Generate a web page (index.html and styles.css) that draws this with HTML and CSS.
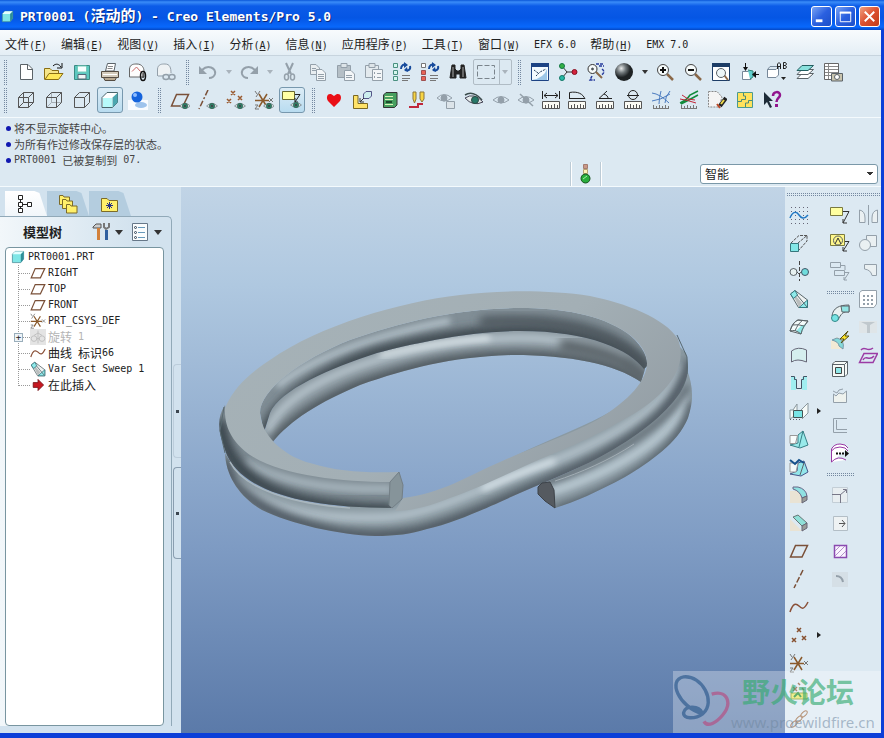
FILE: index.html
```html
<!DOCTYPE html>
<html lang="zh-CN">
<head>
<meta charset="utf-8">
<title>PRT0001 (活动的) - Creo Elements/Pro 5.0</title>
<link rel="stylesheet" href="styles.css">
</head>
<body>
<svg class="sprite" aria-hidden="true">
  <symbol id="plane" viewBox="0 0 20 20"><path d="M6.500 4.500H18.500L13 16H1.500Z" stroke="#7a5038" stroke-width="1.500"/></symbol>
  <symbol id="csys" viewBox="0 0 20 20"><path d="M1 10.500H15M5 4L13 17M13 4L5 17" stroke="#8a5a2c" stroke-width="1.500"/><path d="M1 1L3 4M6 1L2 7M15 8L19 12M19 8L15 12M1 15H4L1 19H5" stroke="#777"/></symbol>
  <symbol id="curve" viewBox="0 0 20 20"><path d="M1 15C4 6 7 6 10 9S15 13 19 5" stroke="#8a5038" stroke-width="1.500"/></symbol>
  <symbol id="cube" viewBox="0 0 20 20"><path d="M2 6L6 2H18V13L14 18H2Z" fill="#7fe6e6" stroke="#3c8490"/><path d="M2 6L6 2H18L14 6Z" fill="#e2ffff" stroke="none"/><path d="M14 6L18 2V13L14 18Z" fill="#2e8e98" stroke="none"/></symbol>
  <symbol id="sweep" viewBox="0 0 20 20"><path d="M1.500 5L6 1.500L18.500 11V18.500H9.500Z" fill="#eef2f2" stroke="#5a686c"/><path d="M5 8L10 18L13 14L6 6Z" fill="#b9bdbd" stroke="none"/><path d="M1.500 5L6 1.500L8.500 6L4.500 9.500Z" fill="#8eeaea" stroke="#367880"/><path d="M18.500 11V18.500H10Z" fill="#8eeaea" stroke="#367880"/><path d="M8 6L18 18" stroke="#5a686c"/></symbol>
  <symbol id="eye" viewBox="0 0 20 20"><path d="M1 10Q10 1 19 10Q10 18 1 10Z" fill="#dfe7e7"/><circle cx="10" cy="10" r="4.500" fill="#2e8068" stroke="#2c5c4c"/><circle cx="10" cy="10" r="1.500" fill="#111"/></symbol>
  <symbol id="ruler" viewBox="0 0 20 20"><path d="M1.500 11.500H18.500V18.500H1.500Z" fill="#fbfbf4" stroke="#555"/><path d="M4.500 18V15M7.500 18V14M10.500 18V15M13.500 18V14M16.500 18V15" stroke="#555"/></symbol>
  <symbol id="lens" viewBox="0 0 20 20"><path d="M12 12L18 18" stroke="#8a6848" stroke-width="2.500"/><circle cx="8" cy="8" r="5.500" fill="#f5fafa" stroke="#444"/></symbol>
  <symbol id="sheets" viewBox="0 0 20 20"><path d="M2.500 2.500H8L11.500 6V12.500H2.500Z" fill="#e9eef1"/><path d="M8.500 7.500H14L17.500 11V18.500H8.500Z" fill="#f3f6f8"/><path d="M10 12.500H16M10 14.500H16M10 16.500H16M4 6.500H8M4 8.500H8"/></symbol>
  <symbol id="regen" viewBox="0 0 20 20"><path d="M10 16.500H18M10 13.500H18M10 18.500H16" stroke="#777"/><path d="M9 7C9 3 12 2 14 3M18 4C19 8 16 9 13 8" stroke="#164a9c" stroke-width="2"/><path d="M12 0L16 3L12 6ZM15 5L12 8L16 10Z" fill="#164a9c" stroke="none"/></symbol>
</svg>

<div class="window">
  <header class="titlebar">
    <svg class="app-icon" viewBox="0 0 20 20"><use href="#cube"/></svg>
    <h1>PRT0001 (<span class="zh">活动的</span>) - Creo Elements/Pro 5.0</h1>
    <div class="caption-buttons">
      <button class="caption" aria-label="最小化"><svg viewBox="0 0 20 20"><path d="M4 14.500H11" stroke="#fff" stroke-width="3"/></svg></button>
      <button class="caption" aria-label="最大化"><svg viewBox="0 0 20 20"><path d="M5 5.500H15.500V15.500H4.500V5" stroke="#fff"/><path d="M4 6H16" stroke="#fff" stroke-width="2"/></svg></button>
      <button class="caption close" aria-label="关闭"><svg viewBox="0 0 20 20"><path d="M5 5L15 15M15 5L5 15" stroke="#fff" stroke-width="2"/></svg></button>
    </div>
  </header>

  <nav class="menubar">
    <a href="#"><span class="zh">文件</span>(<u>F</u>)</a>
    <a href="#"><span class="zh">编辑</span>(<u>E</u>)</a>
    <a href="#"><span class="zh">视图</span>(<u>V</u>)</a>
    <a href="#"><span class="zh">插入</span>(<u>I</u>)</a>
    <a href="#"><span class="zh">分析</span>(<u>A</u>)</a>
    <a href="#"><span class="zh">信息</span>(<u>N</u>)</a>
    <a href="#"><span class="zh">应用程序</span>(<u>P</u>)</a>
    <a href="#"><span class="zh">工具</span>(<u>T</u>)</a>
    <a href="#"><span class="zh">窗口</span>(<u>W</u>)</a>
    <a href="#">EFX 6.0</a>
    <a href="#"><span class="zh">帮助</span>(<u>H</u>)</a>
    <a href="#">EMX 7.0</a>
  </nav>

  <div class="toolbars">
    <div class="toolrow">
      <i class="grip"></i>
      <button class="tool" aria-label="新建"><svg viewBox="0 0 20 20"><path d="M4.500 2.500H12L16.500 7V17.500H4.500Z" fill="#fff"/><path d="M11.500 2.500V7.500H16.500"/></svg></button>
      <button class="tool" aria-label="打开"><svg viewBox="0 0 20 20"><path d="M.500 17.500V6.500H6L8 8.500H14.500V11" fill="#f6e68a" stroke="#8a6e14"/><path d="M1 17.500L5 11.500H19L14.500 17.500Z" fill="#ffe95a" stroke="#8a6e14"/><path d="M9 4C12 1 15 2 17 5M18 1V6H13" stroke="#111"/></svg></button>
      <button class="tool" aria-label="保存"><svg viewBox="0 0 20 20"><path d="M2.500 3.500H17.500V17.500H2.500Z" fill="#5cc8c0" stroke="#3c8a84"/><path d="M5.500 4H14.500V10H5.500Z" fill="#f7ffff" stroke="#7cb"/><path d="M6 12.500H14V17H6Z" fill="#f0f6f6" stroke="#567"/></svg></button>
      <button class="tool" aria-label="打印"><svg viewBox="0 0 20 20"><path d="M5.500 9L7.500 1.500H15.500L14 9Z" fill="#fff"/><path d="M8 4.500H13M7.500 6.500H12.500" stroke="#888"/><path d="M1.500 9.500H18.500V15.500H1.500Z" fill="#d4cbbb" stroke="#554c42"/><path d="M3.500 15.500H16.500L15 18.500H5Z" fill="#b8a890" stroke="#554c42"/><path d="M3 12.500H17" stroke="#fff"/></svg></button>
      <button class="tool" aria-label="邮寄"><svg viewBox="0 0 20 20"><path d="M1.500 15V7C2 2 6 2 9 2C14 2 16 6 16 9V15Z" fill="#fdfdfd" stroke="#666"/><path d="M4 9.500L8.500 5L12.500 9.500" stroke="#c86868"/><ellipse cx="15" cy="14" rx="2.500" ry="4.500" stroke="#111" stroke-width="1.500"/><path d="M15 11V16" stroke="#111"/></svg></button>
      <button class="tool off" aria-label="链接"><svg viewBox="0 0 20 20"><path d="M1.500 14V7C2 2 6 2 9 2C14 2 15 6 15 11" fill="#eef2f4"/><path d="M2 14H7"/><ellipse cx="10" cy="15" rx="3" ry="2.500" stroke-width="1.500"/><ellipse cx="16" cy="15" rx="3" ry="2.500" stroke-width="1.500"/></svg></button>
      <i class="grip"></i>
      <button class="tool off" aria-label="撤消"><svg viewBox="0 0 20 20"><path d="M4 8C10 2 18 6 17 12C16 15 13 16 11 16" stroke-width="2"/><path d="M1 4V12H9Z" fill="#94a0aa" stroke="none"/></svg></button>
      <button class="drop off" aria-label="撤消列表"></button>
      <button class="tool off" aria-label="重做"><svg viewBox="0 0 20 20"><path d="M16 8C10 2 2 6 3 12C4 15 7 16 9 16" stroke-width="2"/><path d="M19 4V12H11Z" fill="#94a0aa" stroke="none"/></svg></button>
      <button class="drop off" aria-label="重做列表"></button>
      <button class="tool off" aria-label="剪切"><svg viewBox="0 0 20 20"><path d="M6 1L11 12M13 1L8 12" stroke-width="2"/><ellipse cx="6.500" cy="15" rx="2" ry="3" stroke-width="1.500"/><ellipse cx="12.500" cy="15" rx="2" ry="3" stroke-width="1.500"/></svg></button>
      <button class="tool off" aria-label="复制"><svg viewBox="0 0 20 20"><use href="#sheets"/></svg></button>
      <button class="tool off" aria-label="粘贴"><svg viewBox="0 0 20 20"><path d="M1.500 3.500H14.500V15.500H1.500Z" fill="#b5bfc6"/><path d="M5 3.500V1.500H11V5.500H5Z" fill="#dde4e8"/><path d="M8.500 8.500H15L18.500 12V18.500H8.500Z" fill="#f3f6f8"/><path d="M10 13.500H16M10 15.500H16"/></svg></button>
      <button class="tool off" aria-label="选择性粘贴"><svg viewBox="0 0 20 20"><path d="M1.500 3.500H14.500V15.500H1.500Z" fill="#e3eaee"/><path d="M5 3.500V1.500H11V5.500H5Z" fill="#dde4e8"/><path d="M8.500 7.500H18.500V18.500H8.500Z" fill="#f3f6f8"/><path d="M10.500 10V12M10.500 14V16M13 11.500H17M13 15.500H17"/></svg></button>
      <button class="tool" aria-label="再生"><svg viewBox="0 0 20 20"><use href="#regen"/><path d="M1.500 1.500H5.500V5.500H1.500ZM1.500 8.500H5.500V12.500H1.500ZM1.500 14.500H5.500V18.500H1.500Z" fill="#d6f6ee" stroke="#4a9080"/></svg></button>
      <button class="tool" aria-label="再生管理器"><svg viewBox="0 0 20 20"><use href="#regen"/><path d="M1.500 1.500H5.500V5.500H1.500Z" fill="#fff" stroke="#777"/><path d="M1.500 8.500H5.500V12.500H1.500ZM1.500 14.500H5.500V18.500H1.500Z" fill="#e86458" stroke="#a05050"/></svg></button>
      <button class="tool" aria-label="查找"><svg viewBox="0 0 20 20"><path d="M4 3H7V7L9 9H11L13 7V3H16L18 16H12V12H8V16H2Z" fill="#222" stroke="#222"/><path d="M5 5V15M15 5V15" stroke="#aaa"/></svg></button>
      <button class="selectbox" aria-label="选取框"><svg viewBox="0 0 20 20"><path d="M1.500 3.500H18.500V16.500H1.500Z" stroke="#7a848c" stroke-dasharray="5 2"/></svg><b></b></button>
      <i class="grip"></i>
      <button class="tool" aria-label="重画"><svg viewBox="0 0 20 20"><path d="M1.500 1.500H18.500V18.500H1.500Z" fill="#f4fbff" stroke="#1d4384"/><path d="M1 3H19" stroke="#1d4384" stroke-width="4"/><path d="M2 18Q14 16 17 7V18Z" fill="#9cc7e8" stroke="none"/><path d="M4 8L8 11M6 14L10 10L16 7" stroke="#28415f" stroke-dasharray="2 1"/></svg></button>
      <button class="tool" aria-label="旋转中心"><svg viewBox="0 0 20 20"><path d="M4 4L9 10L4 16M9 10H16" stroke="#333"/><circle cx="4" cy="4" r="2.500" fill="#35b045" stroke="#174"/><circle cx="4" cy="16" r="2.500" fill="#27b9a6" stroke="#176"/><circle cx="16.500" cy="10" r="2.500" fill="#d4233c" stroke="#812"/></svg></button>
      <button class="tool" aria-label="定向模式"><svg viewBox="0 0 20 20"><path d="M10 10L16 16" stroke="#8a6848" stroke-width="2"/><circle cx="6.500" cy="7" r="4.500" fill="#f6fafa" stroke="#333"/><circle cx="6.500" cy="7" r="1" fill="#333"/><path d="M10 2H17M13 4H18M6 14L4 18H9M16 7C19 9 18 12 15 13" stroke="#253a9c" stroke-width="1.500" stroke-dasharray="3 1"/></svg></button>
      <button class="tool" aria-label="外观库"><svg viewBox="0 0 20 20"><defs><radialGradient id="ball" cx=".35" cy=".3"><stop offset="0" stop-color="#e8eaea"/><stop offset=".5" stop-color="#70777a"/><stop offset="1" stop-color="#1e2224"/></radialGradient></defs><circle cx="10" cy="10" r="9" fill="url(#ball)" stroke="none"/></svg></button>
      <button class="drop" aria-label="外观列表"></button>
      <button class="tool" aria-label="放大"><svg viewBox="0 0 20 20"><use href="#lens"/><path d="M5 8H11M8 5V11" stroke="#111" stroke-width="2"/></svg></button>
      <button class="tool" aria-label="缩小"><svg viewBox="0 0 20 20"><use href="#lens"/><path d="M5 8H11" stroke="#111" stroke-width="2"/></svg></button>
      <button class="tool" aria-label="重新调整"><svg viewBox="0 0 20 20"><path d="M1.500 1.500H18.500V18.500H1.500Z" fill="#fff" stroke="#1d3d66"/><path d="M1 3H19" stroke="#1d3d66" stroke-width="4"/><path d="M13 13L17 18" stroke="#8a6848" stroke-width="2"/><circle cx="10" cy="11" r="4.500" fill="#edf6f8"/></svg></button>
      <button class="tool" aria-label="重定向"><svg viewBox="0 0 20 20"><path d="M3.500 9.500H12V17.500H3.500Z" fill="#fff" stroke="#789"/><path d="M9 8L14 9V15L11 17" fill="#62cfcf" stroke="#387"/><path d="M6.500 1V7M20 12.500H15" stroke="#111"/><path d="M4 5H9L6.500 9ZM17 9V16L13 12.500Z" fill="#111" stroke="none"/></svg></button>
      <button class="tool" aria-label="已命名视图"><svg viewBox="0 0 20 20"><path d="M.500 7.500H9L11.500 5V13L9 15.500H.500Z" fill="#fff" stroke="#789"/><path d="M.500 7.500L3 4.500H11" stroke="#789"/><path d="M10.500 7V2L12 .500L13.500 2V7M10.500 4.500H13.500M16.500 .500V7M16.500 .500H18.500L19.500 2L18.500 3.500L19.500 5L18.500 6.500H16.500M16.500 3.500H18.500" stroke="#222"/><path d="M14 15H19L16.500 18Z" fill="#222" stroke="none"/></svg></button>
      <button class="tool" aria-label="层"><svg viewBox="0 0 20 20"><path d="M2 16.500L7 11.500H18.500L13 16.500Z" fill="#fff"/><path d="M2 12.500L7 7.500H18.500L13 12.500Z" fill="#fff"/><path d="M2 8.500L7 3.500H18.500L13 8.500Z" fill="#89e0dc" stroke="#245e60"/></svg></button>
      <button class="tool" aria-label="视图管理器"><svg viewBox="0 0 20 20"><path d="M1.500 1.500H15.500V17.500H1.500Z" fill="#fff" stroke="#666"/><path d="M5.500 2V17M2 4.500H15M2 7.500H15M2 10.500H15M2 13.500H10" stroke="#888"/><path d="M8.500 11.500H19.500V19H8.500Z" fill="#c9c4ae"/><circle cx="14" cy="15" r="2.500" fill="#fff"/></svg></button>
    </div>

    <div class="toolrow">
      <i class="grip"></i>
      <button class="tool" aria-label="线框"><svg viewBox="0 0 20 20"><path d="M2.500 7.500H12.500V17.500H2.500ZM7.500 2.500H17.500V12.500H7.500ZM2.500 7.500L7.500 2.500M12.500 7.500L17.500 2.500M12.500 17.500L17.500 12.500M2.500 17.500L7.500 12.500" stroke="#555"/></svg></button>
      <button class="tool" aria-label="隐藏线"><svg viewBox="0 0 20 20"><path d="M7.500 2.500V12.500H17.500M2.500 17.500L7.500 12.500" stroke="#a5adb3"/><path d="M2.500 7.500H12.500V17.500H2.500ZM2.500 7.500L7.500 2.500H17.500V12.500L12.500 17.500M12.500 7.500L17.500 2.500" stroke="#555"/></svg></button>
      <button class="tool" aria-label="消隐"><svg viewBox="0 0 20 20"><path d="M2.500 7.500H12.500V17.500H2.500ZM2.500 7.500L7.500 2.500H17.500V12.500L12.500 17.500M12.500 7.500L17.500 2.500" stroke="#555"/></svg></button>
      <button class="tool on" aria-label="着色"><svg viewBox="0 0 20 20"><path d="M2 7.500L7 2.500H17.500V12.500L12.500 17.500H2Z" fill="#fff" stroke="#49666c"/><path d="M12.500 7.500L17.500 3V12.500L12.500 17.500Z" fill="#4aa6b0" stroke="none"/><path d="M3 8H12V17H3Z" fill="#b7fafa" stroke="none"/></svg></button>
      <button class="tool" aria-label="增强的真实感"><svg viewBox="0 0 20 20"><path d="M0 10H20V20H0Z" fill="#f8fbff" stroke="none"/><ellipse cx="13" cy="15" rx="6" ry="3" fill="#9ec3ec" stroke="none"/><circle cx="9" cy="7" r="5.500" fill="#1463dc" stroke="none"/><circle cx="7" cy="5" r="2" fill="#8dbcff" stroke="none"/></svg></button>
      <i class="grip"></i>
      <button class="tool" aria-label="基准平面显示"><svg viewBox="0 0 20 20"><use href="#plane"/><use href="#eye" x="9" y="10" width="12" height="12"/></svg></button>
      <button class="tool" aria-label="基准轴显示"><svg viewBox="0 0 20 20"><path d="M10 0L1 19" stroke="#7a5038" stroke-width="1.500" stroke-dasharray="6 2 2 2"/><use href="#eye" x="8" y="10" width="12" height="12"/></svg></button>
      <button class="tool" aria-label="基准点显示"><svg viewBox="0 0 20 20"><path d="M5 1L9 5M9 1L5 5M1 9L5 13M5 9L1 13M12 6L16 10M16 6L12 10" stroke="#9a5a30" stroke-width="1.500"/><use href="#eye" x="8" y="10" width="12" height="12"/></svg></button>
      <button class="tool" aria-label="坐标系显示"><svg viewBox="0 0 20 20"><use href="#csys"/><use href="#eye" x="9" y="10" width="12" height="12"/></svg></button>
      <button class="tool on" aria-label="注释显示"><svg viewBox="0 0 20 20"><path d="M.500 1.500H12.500V9.500H.500Z" fill="#ffffa4" stroke="#6a6a30"/><path d="M13 4.500H18L13 12M13 8V12H16" stroke="#222"/><use href="#eye" x="8" y="9" width="12" height="12"/></svg></button>
      <i class="grip"></i>
      <button class="tool" aria-label="收藏"><svg viewBox="0 0 20 20"><path d="M10 17L4 11C1 6 5 1 10 6C15 1 19 6 16 11Z" fill="#ea0f16" stroke="none"/></svg></button>
      <button class="tool" aria-label="装配"><svg viewBox="0 0 20 20"><path d="M1.500 5.500H6V13.500H15.500V18.500H1.500Z" fill="#ffe368" stroke="#7b6820"/><path d="M11.500 4L14 1.500H19.500V6L17 8.500H11.500Z" fill="#cceeee" stroke="#558"/><path d="M12 8L8 12M8 8V12H12" stroke="#333"/></svg></button>
      <button class="tool" aria-label="模板"><svg viewBox="0 0 20 20"><path d="M3.500 5L6 2.500H17V15L14.500 17.500H3.500Z" fill="#48a060" stroke="#333"/><path d="M5 6.500H13M5 14.500H13M5 9.500H13" stroke="#ddf5b8"/><path d="M6 12H12" stroke="#1c4c2c" stroke-width="2"/></svg></button>
      <button class="tool" aria-label="编辑"><svg viewBox="0 0 20 20"><path d="M1 17H10V14H15" stroke="#c0273c" stroke-width="2"/><path d="M5 2H8V9L6.500 13L5 9ZM12 2H16V9L14 12L12 9Z" fill="#f8d543" stroke="#8b763b"/></svg></button>
      <button class="tool off" aria-label="隐藏锁定"><svg viewBox="0 0 20 20"><path d="M1 8Q8 1 16 8Q8 14 1 8Z"/><circle cx="8" cy="8" r="3" fill="#94a0aa"/><path d="M10.500 11.500H18.500V18.500H10.500Z" fill="#dce4e9"/></svg></button>
      <button class="tool" aria-label="显示"><svg viewBox="0 0 20 20"><path d="M1 5Q9 0 18 10" stroke="#3c4c4c" stroke-width="1.500"/><path d="M1 8Q10 2 19 12Q9 17 1 8Z" fill="#e6ecec" stroke="#445"/><circle cx="11" cy="10" r="3.500" fill="#277868" stroke="#2c4c44"/></svg></button>
      <button class="tool slim off" aria-label="预览"><svg viewBox="0 0 20 20"><path d="M2 10Q10 3 18 10Q10 16 2 10Z"/><circle cx="10" cy="10" r="3" fill="#94a0aa"/></svg></button>
      <button class="tool slim off" aria-label="取消预览"><svg viewBox="0 0 20 20"><path d="M2 10Q10 3 18 10Q10 16 2 10Z"/><circle cx="10" cy="10" r="3" fill="#94a0aa"/><path d="M4 4L17 16" stroke-width="1.500"/></svg></button>
      <button class="tool slim" aria-label="距离"><svg viewBox="0 0 20 20"><use href="#ruler"/><path d="M1.500 1V9M18.500 1V9M3 5.500H17M6 3L3 5.500L6 8M14 3L17 5.500L14 8" stroke="#222"/></svg></button>
      <button class="tool" aria-label="长度"><svg viewBox="0 0 20 20"><use href="#ruler"/><path d="M2.500 9V2.500C11 1 16 4 18 9M2 8.500H18" stroke="#222"/></svg></button>
      <button class="tool" aria-label="角度"><svg viewBox="0 0 20 20"><use href="#ruler"/><path d="M12 1L4 8.500H17M9 4C12 5 13 7 13 8" stroke="#222"/></svg></button>
      <button class="tool" aria-label="直径"><svg viewBox="0 0 20 20"><use href="#ruler"/><circle cx="10" cy="5" r="4.500" stroke="#222"/><path d="M4 5.500H16" stroke="#222"/></svg></button>
      <button class="tool" aria-label="曲率"><svg viewBox="0 0 20 20"><path d="M1 3Q9 4 18 13M1 11Q10 10 19 4M10 1Q8 8 8 14M19 1Q14 7 14 13" stroke="#4c7cc0"/><path d="M2 18.500H18M2.500 18V15M5.500 18V16M8.500 18V15M11.500 18V16M14.500 18V15M17.500 18V16" stroke="#777"/></svg></button>
      <button class="tool" aria-label="截面"><svg viewBox="0 0 20 20"><path d="M1 13Q8 10 11 5L19 1M2 14Q10 10 19 5" stroke="#118b3b" stroke-width="1.500"/><path d="M1 9Q8 10 17 13M3 5L9 9L16 10" stroke="#c22638"/><path d="M2 18.500H18M2.500 18V15M5.500 18V16M8.500 18V15M11.500 18V16M14.500 18V15M17.500 18V16" stroke="#777"/></svg></button>
      <button class="tool" aria-label="清除"><svg viewBox="0 0 20 20"><path d="M1.500 1.500H10L15 7L12 17H1.500Z" fill="#f4f4f4" stroke="#888" stroke-dasharray="2 1"/><path d="M19 8L13 16" stroke="#222" stroke-width="4"/><path d="M17 10L14 14" stroke="#ecd84b" stroke-width="2"/><path d="M10 14L13 18" stroke="#bb4a28" stroke-width="2"/></svg></button>
      <button class="tool slim" aria-label="插件"><svg viewBox="0 0 20 20"><path d="M2.500 2.500H17.500V17.500H2.500Z" fill="#ffe25c" stroke="#4a9a90"/><path d="M8.500 3V6H10.500V9.500H6.500V11.500H3M17 10.500H13.500V13H10.500V17" stroke="#4a8a78"/></svg></button>
      <button class="tool slim" aria-label="上下文帮助"><svg viewBox="0 0 20 20"><path d="M2 2V15L5 12L8 18L10 17L7 11H11Z" fill="#1d2b38" stroke="none"/><path d="M11 6C11 1 18 1 18 5C18 8 14.500 8 14.500 12" stroke="#92168e" stroke-width="2.500"/><path d="M13 14H16V17H13Z" fill="#92168e" stroke="none"/></svg></button>
    </div>
  </div>

  <section class="status">
    <ul class="messages">
      <li><span class="zh">将不显示旋转中心。</span></li>
      <li><span class="zh">为所有作过修改保存层的状态。</span></li>
      <li>PRT0001 <span class="zh">已被复制到</span> 07.</li>
    </ul>
    <div class="light"><svg viewBox="0 0 12 20"><path d="M3.500 .500H7.500V4.500H3.500Z" fill="#c99888" stroke="#a47c70"/><path d="M3.500 5.500H7.500V9.500H3.500Z" fill="#fff3b8" stroke="#b8a470"/><circle cx="5.500" cy="14.500" r="4.500" fill="#28ad3c" stroke="#14501c"/><path d="M3 15L7 12" stroke="#a4f0a8"/></svg></div>
    <select class="filter" aria-label="过滤器"><option>智能</option></select>
  </section>

  <main class="work">
    <aside class="navigator">
      <div class="tabs">
        <button class="tab active" aria-label="模型树"><svg viewBox="0 0 20 20"><path d="M2.500 1.500H6.500V5.500H2.500ZM2.500 8.500H6.500V12.500H2.500ZM2.500 14.500H6.500V18.500H2.500ZM11.500 8.500H15.500V12.500H11.500Z" fill="#fff" stroke="#222"/><path d="M6.500 10.500H11.500M4.500 5.500V8M4.500 12V14.500" stroke="#222"/></svg></button>
        <button class="tab" aria-label="文件夹浏览器"><svg viewBox="0 0 20 20"><g fill="#fff06a" stroke="#7c6b28"><path d="M1.500 1.500H5L6 3H11.500V10.500H1.500Z"/><path d="M4.500 5.500H8L9 7H14.500V14.500H4.500Z"/><path d="M8.500 10.500H12L13 12H19V19H8.500Z"/></g></svg></button>
        <button class="tab" aria-label="收藏夹"><svg viewBox="0 0 20 20"><path d="M1.500 4.500H7L9 6.500H17.500V17.500H1.500Z" fill="#fff06a" stroke="#7c6b28"/><path d="M9.500 8V15M6 11.500H13M7 9L12 14M12 9L7 14" stroke="#243088"/></svg></button>
      </div>
      <div class="panel">
        <div class="panel-head">
          <h2>模型树</h2>
          <button class="mini" aria-label="设置"><svg viewBox="0 0 20 20"><path d="M2 5L5 2H10V6H2Z" fill="#ccc" stroke="#555"/><path d="M7.500 6V18" stroke="#d2803a" stroke-width="3"/><path d="M13 1V5L15 7L18 5V1" stroke="#777" stroke-width="2"/><path d="M15.500 8V18" stroke="#3060a0" stroke-width="3"/></svg></button><b class="tri"></b>
          <button class="mini" aria-label="显示"><svg viewBox="0 0 20 20"><path d="M2.500 1.500H17.500V18.500H2.500Z" fill="#f9fcfd" stroke="#678"/><path d="M8 5.500H15M8 10.500H15M8 15.500H15" stroke="#69b"/><circle cx="5.500" cy="5.500" r="1" stroke="#345"/><circle cx="5.500" cy="10.500" r="1" stroke="#345"/><circle cx="5.500" cy="15.500" r="1" stroke="#345"/></svg></button><b class="tri"></b>
        </div>
        <div class="tree">
          <p class="root"><svg viewBox="0 0 20 20"><use href="#cube"/></svg>PRT0001.PRT</p>
          <ul>
            <li><svg viewBox="0 0 20 20"><use href="#plane"/></svg>RIGHT</li>
            <li><svg viewBox="0 0 20 20"><use href="#plane"/></svg>TOP</li>
            <li><svg viewBox="0 0 20 20"><use href="#plane"/></svg>FRONT</li>
            <li><svg viewBox="0 0 20 20"><use href="#csys"/></svg>PRT_CSYS_DEF</li>
            <li class="dim"><button class="expander" aria-label="展开">+</button><svg viewBox="0 0 20 20"><path d="M0 0H20V20H0Z" fill="#e4e4e4" stroke="none"/><circle cx="5" cy="12" r="3.500"/><circle cx="15" cy="12" r="3.500"/><path d="M5 8L10 5L15 8M10 2V18M8 12H12"/></svg><span class="zh">旋转</span> 1</li>
            <li><svg viewBox="0 0 20 20"><use href="#curve"/></svg><span class="zh">曲线</span>&nbsp;<span class="zh">标识</span>66</li>
            <li><svg viewBox="0 0 20 20"><use href="#sweep"/></svg>Var Sect Sweep 1</li>
            <li><svg viewBox="0 0 20 20"><path d="M4 7H10V3L17 10L10 17V13H4Z" fill="#c61820" stroke="#701015"/></svg><span class="zh">在此插入</span></li>
          </ul>
        </div>
      </div>
      <div class="sash"><i></i><i class="lower"></i></div>
    </aside>

    <section class="viewport">
      <svg viewBox="181 187 604 546" role="img" aria-label="钥匙环模型">
        <defs>
          <filter id="soft" x="-20%" y="-20%" width="140%" height="140%"><feGaussianBlur stdDeviation="5"/></filter>
          <filter id="fine" x="-20%" y="-20%" width="140%" height="140%"><feGaussianBlur stdDeviation="3"/></filter>
          <linearGradient id="top" x1="0" y1="0" x2="1" y2=".6"><stop offset="0" stop-color="#a6b2b7"/><stop offset=".6" stop-color="#a3afb5"/><stop offset="1" stop-color="#939da4"/></linearGradient>
          <clipPath id="hiInner"><path d="M260 413C260 390 300 360 350 340C400 322 460 308 520 308C560 308 600 314 627 333C640 343 648 355 647 366L644 369C630 350 590 331 520 331C470 331 410 344 377 353C330 368 280 390 270 413L264 432Z"/></clipPath>
          <clipPath id="loInner"><path d="M264 434L270 413C280 390 330 368 377 353C410 344 470 331 520 331C590 331 630 350 645 369L641 382C615 364 570 355 513 355C450 357 410 368 360 385C320 402 290 420 272 443Z"/></clipPath>
          <clipPath id="tail"><path d="M687 370C693 385 694 400 688 418C678 443 650 462 625 477C597 492 575 502 555 508L546 482C600 460 650 430 687 370Z"/></clipPath>
          <clipPath id="front"><path d="M678 345L686 353C690 368 688 380 680 393C665 415 637 437 600 457C570 473 537 485 500 502C480 511 450 524 427 529C410 534 397 536 375 536C340 535 290 524 262 510C240 497 226 477 225 453L231 463C245 490 290 503 343 507L403 500C420 509 480 470 550 440C610 415 660 390 678 345Z"/></clipPath>
          <clipPath id="outer"><path d="M225 405C215 420 220 435 225 450C238 490 300 508 392 508V480C320 480 230 460 225 405Z"/></clipPath>
        </defs>
        <g clip-path="url(#loInner)">
          <path d="M250 320H660V450H250Z" fill="#89969e"/>
          <path d="M268 432C280 398 330 374 377 360C420 348 470 338 520 338C560 338 600 346 624 360" stroke="#b0bec6" stroke-width="9" filter="url(#fine)"/>
          <path d="M380 355Q440 341 490 338" stroke="#dfe8ec" stroke-width="5" filter="url(#fine)"/>
          <path d="M272 445C290 420 320 402 360 385C410 368 450 357 513 356C570 356 615 364 643 384" stroke="#40494f" stroke-width="9" filter="url(#soft)"/>
          <path d="M560 345C600 350 630 360 645 380" stroke="#5c656b" stroke-width="14" filter="url(#soft)"/>
        </g>
        <g clip-path="url(#hiInner)">
          <path d="M250 300H660V440H250Z" fill="#818e96"/>
          <path d="M277 386C320 352 390 333 450 321" stroke="#b3c1c9" stroke-width="7" filter="url(#fine)"/>
          <path d="M265 440C266 404 330 368 377 353C410 344 470 331 520 331C590 331 630 350 647 372" stroke="#39424a" stroke-width="12" filter="url(#soft)"/>
          <path d="M480 322C570 316 625 334 647 370" stroke="#4c555b" stroke-width="10" filter="url(#soft)"/>
        </g>
        <g clip-path="url(#tail)">
          <path d="M530 360H700V515H530Z" fill="#8b9aa3"/>
          <path d="M550 492C600 476 670 445 688 398" stroke="#b5c5ce" stroke-width="10" filter="url(#fine)"/>
          <path d="M555 511C600 497 690 457 692 400" stroke="#455058" stroke-width="8" filter="url(#soft)"/>
          <path d="M546 482C600 465 670 425 688 385" stroke="#606b72" stroke-width="5" filter="url(#fine)"/>
        </g>
        <path d="M555 481C580 473 610 460 634 444" stroke="#a2adb4"/>
        <g clip-path="url(#front)">
          <path d="M210 330H700V545H210Z" fill="#8b9aa2"/>
          <path d="M234 480C265 511 320 521 390 517C440 512 490 483 540 466C600 444 664 413 683 365" stroke="#adbcc5" stroke-width="10" filter="url(#fine)"/>
          <path d="M482 489Q520 472 555 461" stroke="#d7e2e8" stroke-width="6" filter="url(#fine)"/>
          <path d="M225 458C226 490 270 520 340 533C400 541 435 530 500 502C537 485 570 473 600 457C650 430 680 405 690 360" stroke="#3f4a52" stroke-width="9" filter="url(#soft)"/>
        </g>
        <g clip-path="url(#outer)">
          <path d="M210 390H400V515H210Z" fill="#7f8c94"/>
          <path d="M245 462C280 483 330 490 392 489" stroke="#a3b1b9" stroke-width="9" filter="url(#fine)"/>
          <path d="M220 420C225 490 300 509 394 510" stroke="#363f46" stroke-width="12" filter="url(#soft)"/>
        </g>
        <path d="M230 462C244 490 295 504 350 508" stroke="#a9b6bd" stroke-width="1.500"/>
        <path d="M225 408C235 384 255 370 270 360C320 325 400 302 460 295C500 290 550 290 590 296C625 303 665 318 678 339C690 371 660 400 623 420C598 434 580 443 550 455C510 472 480 488 450 498C435 504 415 511 395 511L403 498C440 494 470 475 500 462C535 446 570 435 597 420C630 400 647 380 647 363C647 350 635 338 627 333C600 314 560 308 520 308C460 308 400 322 350 340C300 360 260 390 260 413C262 440 290 458 310 463C340 472 365 473 399 472L390 482C340 482 280 475 250 455C235 444 224 430 225 408Z" fill="url(#top)"/>
        <path d="M224 407L220 431L225 453M677 335L687 357V374" stroke="#596970"/>
        <path d="M390 482L399 472L403 485L402 499L392 508L389 505Z" fill="#86949a" stroke="#737f86"/>
        <path d="M538 487L542 483L550 482L554 490L555 508L545 501L538 494Z" fill="#555a60" stroke="#3d4349"/>
      </svg>
    </section>

    <aside class="palette">
      <div class="column first">
        <button class="tool" aria-label="草绘"><svg viewBox="0 0 20 20"><path d="M2 2.500H19M2 6.500H19M2 10.500H19M2 14.500H19M2 18.500H19" stroke="#667" stroke-dasharray="1 3"/><path d="M1 13C4 5 8 7 10 10S15 15 19 10" stroke="#2278c4" stroke-width="1.500"/></svg></button>
        <button class="tool" aria-label="拉伸"><svg viewBox="0 0 20 20"><path d="M9 10L18 2.500V8L10 17M2 10L10 2.500H18" stroke="#555" stroke-dasharray="3 1"/><path d="M1.500 10.500H9.500V18.500H1.500Z" fill="#82e7e7" stroke="#36767c"/></svg></button>
        <button class="tool" aria-label="旋转"><svg viewBox="0 0 20 20"><path d="M10.500 0V20" stroke="#444" stroke-dasharray="4 2"/><path d="M4 7L10 13M17 8L11 12" stroke="#555"/><circle cx="4.500" cy="11" r="3.500" fill="#e7f1f1"/><circle cx="16" cy="11" r="3.500" fill="#70dddd" stroke="#456"/></svg></button>
        <button class="tool" aria-label="可变截面扫描"><svg viewBox="0 0 20 20"><use href="#sweep"/></svg></button>
        <button class="tool" aria-label="边界混合"><svg viewBox="0 0 20 20"><path d="M1 14C3 8 5 5 9 3L19 4C16 8 13 11 12 17Z" fill="#f4fbfb"/><path d="M12 9L17 7L12 17L7 14Z" fill="#8de8e8" stroke="none"/><path d="M1 14Q6 12 12 17M1 14C3 8 5 5 9 3L19 4C16 8 13 11 12 17M4 8Q9 7 15 9M6 14C8 9 10 6 14 3"/></svg></button>
        <button class="tool" aria-label="填充"><svg viewBox="0 0 20 20"><path d="M2.500 17V6Q9 1 17.500 5V17Q8 13 2.500 17Z" fill="#d5eeee" stroke="#667"/></svg></button>
        <button class="tool" aria-label="孔"><svg viewBox="0 0 20 20"><path d="M2 4H7V17H2ZM13 4H18V17H13Z" fill="#a0eef0" stroke="none"/><path d="M2 3.500H5.500V6.500H7.500V15.500H12.500V6.500H14.500V3.500H18" stroke="#456"/></svg></button>
        <button class="tool" aria-label="壳"><svg viewBox="0 0 20 20"><path d="M4 9L8 3V13L1 18V9ZM12 9L19 2V12L13 18" fill="#f5faf8" stroke="#8a989e"/><path d="M4.500 9.500H13.500V16.500H4.500Z" fill="#79e5e5" stroke="#455"/><path d="M1 18.500H13" stroke-dasharray="1 2"/></svg></button>
        <button class="tool" aria-label="筋"><svg viewBox="0 0 20 20"><path d="M9 6L14 2L19 16L11 19L1 16L9 14Z" fill="#98eaea" stroke="#387f85"/><path d="M1 6.500H8.500L6.500 14.500H1Z" fill="#f8fcfc" stroke="#999"/><path d="M14 2L10 18" stroke="#387f85"/></svg></button>
        <button class="tool" aria-label="拔模"><svg viewBox="0 0 20 20"><path d="M9 6L15 4L19 15L12 19L1 17L8 14Z" fill="#92e6ea" stroke="#458"/><path d="M1 6H9L7 15H1Z" fill="#f5fafa" stroke="#999"/><path d="M1 3L6 7L10 3L15 6" stroke="#17528c" stroke-width="2"/><path d="M15 6L11 18"/></svg></button>
        <button class="tool" aria-label="倒圆角"><svg viewBox="0 0 20 20"><path d="M1 6H8Q13 9 14 18H1Z" fill="#e9e3d4" stroke="none"/><path d="M4 2H9Q17 4 18 11L13 13Q11 6 4 4Z" fill="#90e2e2" stroke="#668"/><path d="M18 11V15L13 18V13Z" fill="#999c98" stroke="#667"/></svg></button>
        <button class="tool" aria-label="倒角"><svg viewBox="0 0 20 20"><path d="M1 6L13 18H1Z" fill="#e9e3d4" stroke="none"/><path d="M4 4L9 2L18 10L13 13Z" fill="#90e0d8" stroke="#677"/><path d="M18 10V15L13 18V13Z" fill="#999c98" stroke="#667"/></svg></button>
        <button class="tool" aria-label="基准平面"><svg viewBox="0 0 20 20"><use href="#plane"/></svg></button>
        <button class="tool" aria-label="基准轴"><svg viewBox="0 0 20 20"><path d="M14 1L5 19" stroke="#7a5038" stroke-width="1.500" stroke-dasharray="6 2"/></svg></button>
        <button class="tool" aria-label="基准曲线"><svg viewBox="0 0 20 20"><use href="#curve"/></svg></button>
        <button class="tool" aria-label="基准点"><svg viewBox="0 0 20 20"><path d="M8 3L12 7M12 3L8 7M3 13L7 17M7 13L3 17M13 11L17 15M17 11L13 15" stroke="#87502f" stroke-width="1.500"/></svg></button>
        <button class="tool" aria-label="坐标系"><svg viewBox="0 0 20 20"><use href="#csys"/></svg></button>
        <button class="tool" aria-label="分析特征"><svg viewBox="0 0 20 20"><path d="M4 6L8 10M8 6L4 10M9 2L11 4M13 7L15 9" stroke="#87502f" stroke-width="1.500"/><path d="M2 12H18V18H2Z" fill="#e9e55a" stroke="#7a9c28"/><path d="M5 16L9 12L12 16" stroke="#188a2c" stroke-width="2"/></svg></button>
        <button class="tool" aria-label="参照"><svg viewBox="0 0 20 20"><g stroke="#96643c"><ellipse cx="5" cy="15" rx="4" ry="2" transform="rotate(-45 5 15)"/><ellipse cx="10" cy="10" rx="4" ry="2" transform="rotate(-45 10 10)"/><ellipse cx="15" cy="5" rx="4" ry="2" transform="rotate(-45 15 5)"/></g></svg></button>
      </div>
      <div class="flyouts"><button class="fly shell-fly" aria-label="展开壳"></button><button class="fly point-fly" aria-label="展开基准点"></button></div>
      <div class="column">
        <button class="tool" aria-label="注释"><svg viewBox="0 0 20 20"><path d="M.500 2.500H12.500V10.500H.500Z" fill="#ffffa0" stroke="#7a7a40"/><path d="M13 6.500H19L13 18M13 14V18H17" stroke="#333"/></svg></button>
        <button class="tool" aria-label="传播注释"><svg viewBox="0 0 20 20"><path d="M.500 1.500H14.500V12.500H.500Z" fill="#fff78a" stroke="#7a7a40"/><circle cx="8" cy="7.500" r="4.500"/><path d="M5 11L8 5L11 11M15 8.500H19L13 18M13 14V18H17" stroke="#333"/></svg></button>
        <button class="tool off" aria-label="注释元素"><svg viewBox="0 0 20 20"><path d="M.500 1.500H10.500V6.500H.500ZM4.500 9.500H14.500V14.500H4.500ZM11 4.500H15V9M15 11.500H19L14 19M14 16V19H17"/></svg></button>
        <i class="rule"></i>
        <button class="tool" aria-label="管道"><svg viewBox="0 0 20 20"><path d="M2 13C3 5 9 2 19 2V9C13 8 11 11 8 17Z" fill="#e9f1f1"/><path d="M11 3H19V9L12 9Z" fill="#92e4e4"/><circle cx="5" cy="15" r="3.500" fill="#77e4e4" stroke="#388"/></svg></button>
        <button class="tool" aria-label="自动倒圆角"><svg viewBox="0 0 20 20"><path d="M1 10L7 6Q15 9 13 18H1Z" fill="#f3ead5" stroke="none"/><path d="M7 7Q15 9 13 18L9 15Q9 11 2 9Z" fill="#85dada" stroke="#79a"/><path d="M18 0L10 8H14L11 12L19 5H15Z" fill="#ffe52a" stroke="#555018"/></svg></button>
        <button class="tool" aria-label="抽壳"><svg viewBox="0 0 20 20"><path d="M2.500 5L5 2.500H17.500V15L15 17.500H2.500Z" fill="#f7faf7"/><path d="M2.500 5.500H14.500V17.500M14.500 5.500L17.500 2.500"/><path d="M5.500 8.500H11.500V14.500H5.500Z" fill="#90e8e8" stroke="#444"/></svg></button>
        <button class="tool off" aria-label="扭曲"><svg viewBox="0 0 20 20"><path d="M3.500 15.500V7L6 9L9 6L13 7L16.500 4V15.500Z" fill="#eef2ee"/><path d="M3 4L7 6L9 3L13 2"/></svg></button>
        <button class="tool off" aria-label="修剪"><svg viewBox="0 0 20 20"><path d="M17 3.500H3.500V17.500H17M6.500 5V14.500H17"/></svg></button>
        <button class="tool" aria-label="偏移"><svg viewBox="0 0 20 20"><path d="M1.500 19V6Q4 1 10 1Q16 1 18 5M1.500 8Q4 4 10 4Q16 4 18 8M1.500 19Q8 12 16 17" fill="#fff" stroke="#9738a4"/><path d="M6 10.500H17" stroke="#111" stroke-dasharray="2 1" stroke-width="2"/><path d="M15 7L19 10.500L15 14Z" fill="#111" stroke="none"/></svg></button>
        <i class="rule"></i>
        <button class="tool off" aria-label="缩放"><svg viewBox="0 0 20 20"><path d="M2.500 2.500H17.500V17.500H2.500Z" fill="#e8eef1" stroke="#c3ced6"/><path d="M2 9.500H10.500V18M10 10L16 5M13 4.500H16.500V8" stroke="#778"/></svg></button>
        <button class="tool off" aria-label="移动"><svg viewBox="0 0 20 20"><path d="M3.500 3.500H17.500V17.500H3.500Z" fill="#eef2f3" stroke="#b3bec6"/><path d="M9 10.500H15M12 7L15 10.500L12 14" stroke="#555"/></svg></button>
        <button class="tool" aria-label="剖面"><svg viewBox="0 0 20 20"><path d="M4.500 4.500H16.500V16.500H4.500Z" fill="#faf4ff" stroke="#8a4ab0" stroke-width="1.500"/><path d="M5 10L10 5M5 15L15 5M10 16L16 10" stroke="#b191c8"/></svg></button>
        <button class="tool off" aria-label="圆弧"><svg viewBox="0 0 20 20"><path d="M2 3H18V18H2Z" fill="#d5dfe6" stroke="none"/><path d="M6 7Q12 7 13 13" stroke-width="2"/></svg></button>
      </div>
      <div class="column">
        <button class="tool off" aria-label="镜像"><svg viewBox="0 0 20 20"><path d="M10.500 0V20"/><path d="M1.500 17.500V5Q7 6 7 13V17.500ZM19.500 17.500V5Q14 6 14 13V17.500Z" fill="#eaf0f2"/></svg></button>
        <button class="tool off" aria-label="合并"><svg viewBox="0 0 20 20"><path d="M8.500 2.500H18.500V13.500H8.500Z" fill="#eaf0f2"/><circle cx="7" cy="12" r="5.500" fill="#eaf0f2"/></svg></button>
        <button class="tool off" aria-label="裁剪"><svg viewBox="0 0 20 20"><path d="M6.500 3.500H18.500V14.500H14Q13 9 6.500 8Z" fill="#eaf0f2"/></svg></button>
        <button class="tool off" aria-label="阵列"><svg viewBox="0 0 20 20"><path d="M1.500 3.500L4 1.500H18.500V15L16 18.500H1.500Z" fill="#fff"/><path d="M5 7H16M5 11H16M5 15H16" stroke-dasharray="2 2" stroke-width="2"/></svg></button>
        <button class="tool off" aria-label="螺纹"><svg viewBox="0 0 20 20"><path d="M1 4H19V16H1Z" fill="#dfe5e8" stroke="none"/><path d="M3 5H17L12 8V16H9V8Z" fill="#c0c8cd" stroke="none"/></svg></button>
        <button class="tool" aria-label="投影"><svg viewBox="0 0 20 20"><path d="M3 5C7 0 9 8 15 3M1.500 17.500L6 8.500H19.500L15 17.500ZM5 15C8 9 11 17 16 11" stroke="#9b3ba5" stroke-width="1.500"/></svg></button>
      </div>
    </aside>
  </main>

  <div class="watermark">
    <svg viewBox="0 0 60 60"><path d="M30 43C6 36-6 8 11 5C30 3 45 31 31 43C23 49 10 49 11 42C13 34 27 35 30 42" stroke="#29578c" stroke-width="3.500"/><path d="M40 23C56 18 62 32 51 45C45 52 36 58 32 51" stroke="#b74b80" stroke-width="3.500"/></svg>
    <div><strong>野火论坛</strong><span>www.proewildfire.cn</span></div>
  </div>
</div>
</body>
</html>
```

FILE: styles.css
```css
* { box-sizing: border-box; }

body {
  margin: 0;
  font: 10px/16px "DejaVu Sans Mono", "Noto Sans CJK SC", monospace;
  color: #222;
}

h1, h2, p, ul { margin: 0; padding: 0; }
ul { list-style: none; }
button { padding: 0; border: 0; background: none; font: inherit; color: inherit; }
svg { display: block; width: 20px; height: 20px; fill: none; stroke: #5b6368; flex: none; }
.sprite { position: absolute; width: 0; height: 0; }
symbol { stroke: inherit; }
.zh { font: 12px/16px "Noto Sans CJK SC", sans-serif; }

.window {
  position: relative;
  display: flex;
  flex-direction: column;
  min-height: 100vh;
  border: solid #0c3fd8;
  border-width: 0 3px 5px 0;
  background: #dce9f2;
}

/* Title bar */
.titlebar {
  display: flex;
  align-items: center;
  height: 30px;
  margin-right: -3px;
  padding: 2px 4px 0 1px;
  background: linear-gradient(#0a56d8 0, #3a8cf8 2px, #0c5ce8 6px, #0556e4 18px, #0868fc 27px, #0447c4 30px);
}
.app-icon { width: 13px; height: 13px; margin-right: 6px; }
.titlebar h1 { flex: 1; font-size: 13px; line-height: 20px; color: #fff; text-shadow: 1px 1px #0a2a80; }
.titlebar .zh { font-size: 15px; line-height: 20px; font-weight: bold; }
.caption-buttons { display: flex; gap: 3px; }
.caption {
  width: 21px;
  height: 21px;
  border: 1px solid #fff;
  border-radius: 3px;
  background: linear-gradient(135deg, #7aa4f4, #2a60e0 50%, #1c4fc8);
}
.caption svg { width: 19px; height: 19px; }
.close { background: linear-gradient(135deg, #f0a080, #dc5030 50%, #c03c18); }

/* Menus */
.menubar {
  display: flex;
  align-items: center;
  gap: 14px;
  height: 26px;
  padding: 4px 5px 0;
  border-bottom: 1px solid #c7d4de;
  background: linear-gradient(#f8fbfd, #e4eef5);
}
.menubar a { color: #222; text-decoration: none; white-space: nowrap; }

/* Toolbars */
.toolbars { padding: 2px 0 3px; border-bottom: 1px solid #f4fafd; }
.toolrow { display: flex; align-items: center; height: 28px; padding-left: 3px; }
.grip, .rule {
  background:
    linear-gradient(#dce9f2 1px, transparent 1px) 0 0 / 2px 2px,
    linear-gradient(90deg, #dce9f2 1px, #7488a0 1px) 0 0 / 2px 2px;
}
.grip {
  width: 4px;
  height: 26px;
  margin: 0 5px;
}
.grip:first-child { margin-left: 0; }
.tool { display: grid; place-items: center; width: 28px; height: 28px; flex: none; }
.slim { width: 25px; }
.slim:nth-last-child(-n+2) { width: 27px; }
.off svg { stroke: #94a0aa; }
.on { width: 26px; height: 26px; margin: 0 1px; border: 1px solid #7798ae; border-radius: 3px; background: linear-gradient(#dcecf6, #b8dcf0); }
.drop { display: grid; place-items: center; width: 13px; height: 28px; }
.drop::after, .tri, .selectbox b { content: ""; border: solid transparent; border-width: 4px 3px 0; border-top-color: #333; }
.drop.off::after, .selectbox b { border-top-color: #a9b3bc; }
.selectbox {
  display: flex;
  align-items: center;
  justify-content: space-between;
  width: 39px;
  height: 26px;
  margin-left: 1px;
  padding: 0 3px 0 2px;
  border: 1px solid #b0bcc5;
  border-radius: 2px;
  background: linear-gradient(90deg, transparent 25px, #b0bcc5 25px, #b0bcc5 26px, transparent 26px);
}

/* Message area */
.status { display: flex; align-items: flex-end; height: 69px; padding-right: 3px; border-bottom: 1px solid #f4fafd; }
.messages { flex: 1; align-self: flex-start; padding: 2px 0 0 6px; color: #444; }
.messages .zh { font-size: 11px; }
.messages li { display: flex; align-items: center; height: 16px; white-space: pre; }
.messages li::before { content: ""; width: 5px; height: 5px; margin-right: 3px; border-radius: 50%; background: #1018b0; }
.light {
  display: grid;
  place-items: center;
  width: 31px;
  height: 24px;
  margin-right: 99px;
  border: solid #bccbd6;
  border-width: 0 1px;
  box-shadow: 1px 0 #fff, inset 1px 0 #fff;
}
.light svg { width: 12px; }
.filter {
  width: 178px;
  height: 20px;
  margin-bottom: 2px;
  padding: 0 4px;
  border: 1px solid #7a98a8;
  border-radius: 3px;
  appearance: none;
  color: #222;
  font: 12px/18px "Noto Sans CJK SC", sans-serif;
  background:
    linear-gradient(to bottom left, #333 50%, transparent 50%) right 7px top 7px / 3px 4px no-repeat,
    linear-gradient(to bottom right, #333 50%, transparent 50%) right 4px top 7px / 3px 4px no-repeat,
    #fff;
}

/* Model tree */
.work { display: flex; flex: 1; }
.navigator {
  display: grid;
  grid-template: auto 1fr / 1fr 9px;
  flex: none;
  width: 181px;
  padding: 4px 0 7px;
  background: #d2e2ee;
}
.tabs { display: flex; grid-column: 1 / 3; height: 25px; padding-left: 5px; }
.tab { display: grid; place-items: center; width: 42px; height: 25px; background: #b4cddf; clip-path: polygon(0 0, 70% 0, 82% 8%, 100% 100%, 0 100%); }
.tab.active { background: linear-gradient(#fff, #f1f6fa); }
.panel {
  display: flex;
  flex-direction: column;
  padding: 0 7px 0 5px;
  border: solid #91a9b8;
  border-width: 1px 1px 0 0;
  border-radius: 0 5px 0 0;
  background: linear-gradient(90deg, #f2f7fa, #d2e2ee 80%);
}
.panel-head { display: flex; align-items: center; height: 30px; }
.panel-head h2 { flex: 1; padding-left: 18px; font: bold 13px/16px "Noto Sans CJK SC", sans-serif; }
.mini { margin-right: 4px; }
.tri { width: 8px; border-width: 5px 4px 0; }
.tri + .mini { margin-left: 7px; }
.tri:last-child { margin-right: 2px; }
.tree { flex: 1; width: 159px; padding: 1px 0 0 5px; border: 1px solid #7895a0; border-radius: 4px; background: #fff; }
.tree p, .tree li { display: flex; align-items: center; height: 16px; white-space: pre; }
.tree svg { width: 16px; height: 16px; margin-right: 3px; }
.tree .root svg { width: 14px; height: 14px; }
.tree ul { position: relative; margin-left: 7px; border-left: 1px dotted #999; height: 121px; }
.tree li::before { content: ""; width: 11px; border-top: 1px dotted #999; }
.tree li svg { margin-right: 2px; }
.dim { color: #b4b4b4; }
.dim svg { stroke: #b9b9b9; }
.expander {
  position: absolute;
  left: -5px;
  width: 9px;
  height: 9px;
  border: 1px solid #9aaebb;
  background: #eef4f8;
  color: #222;
  font-size: 9px;
  line-height: 6px;
}
.sash { display: flex; flex-direction: column; gap: 9px; padding-top: 148px; }
.sash i { display: grid; place-items: center; height: 94px; margin-left: 1px; border: 1px solid #bccddb; border-right: 0; border-radius: 4px 0 0 4px; }
.sash .lower { height: 92px; border-color: #8a9eb0; }
.sash i::after { content: ""; width: 3px; height: 3px; background: #3c4650; }

/* Model view */
.viewport { flex: 1; min-width: 0; background: linear-gradient(#c1d4e6, #afc8e0 18%, #7e9bc3 66%, #5b7aa9); }
.viewport svg { width: 100%; height: 100%; stroke: none; }

/* Feature palette */
.palette {
  display: grid;
  grid-template-columns: 28px 13px 28px 27px;
  align-content: start;
  flex: none;
  background: #dce9f2;
}
.palette::before {
  content: "";
  grid-column: 1 / -1;
  height: 4px;
  margin: 5px 0 5px 1px;
  background:
    linear-gradient(#dce9f2 1px, transparent 1px) 0 0 / 2px 2px,
    linear-gradient(90deg, #dce9f2 1px, #7488a0 1px) 0 0 / 2px 2px;
}
.column { display: flex; flex-direction: column; }
.rule { height: 4px; margin: 5px 0; }
.flyouts { display: grid; grid-template-rows: 196px 28px 196px 28px; }
.fly { display: grid; place-items: center; width: 11px; }
.fly::after { content: ""; border: solid transparent; border-width: 3px 0 3px 4px; border-left-color: #222; }
.shell-fly { grid-row: 2; }
.point-fly { grid-row: 4; }

/* Forum mark over the lower right corner */
.watermark {
  position: absolute;
  right: 0;
  bottom: 0;
  display: flex;
  width: 208px;
  height: 62px;
  background: rgba(255, 255, 255, .3);
  pointer-events: none;
}
.watermark svg { width: 58px; height: 60px; opacity: .65; }
.watermark div { display: flex; flex-direction: column; }
.watermark strong { padding-left: 11px; font: bold 28px/41px "Noto Sans CJK SC", sans-serif; color: rgba(50, 170, 110, .65); }
.watermark span { font: 15px/21px "Noto Sans", sans-serif; color: rgba(110, 135, 160, .55); }
```
